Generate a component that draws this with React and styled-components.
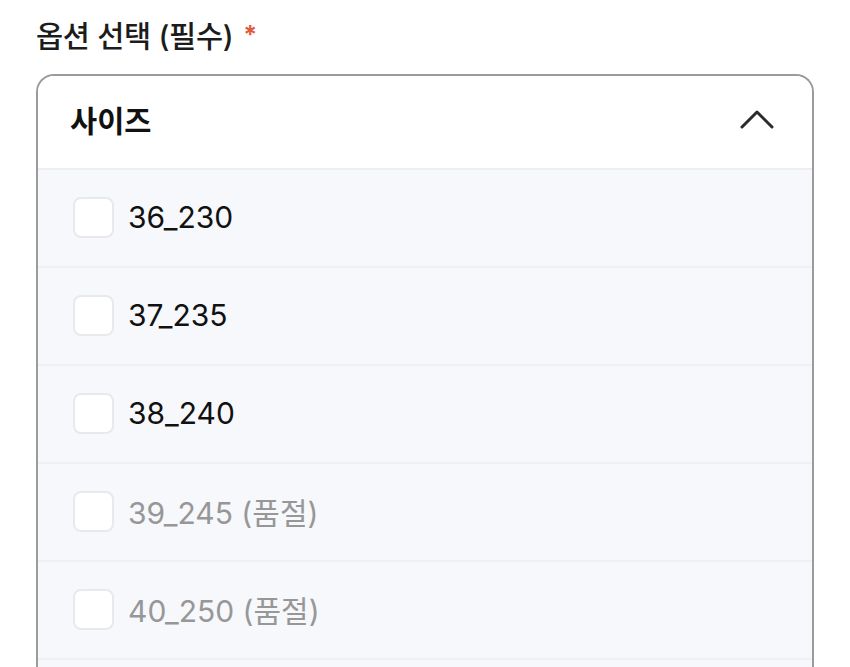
import styled, { createGlobalStyle } from 'styled-components'

const Global = createGlobalStyle`
  html, body {
    margin: 0;
    padding: 0;
    background: #fff;
    overflow: hidden;
  }
  body {
    font-family: 'Inter', 'Noto Sans CJK KR', sans-serif;
    color: #111;
  }
`

const Page = styled.div`
  padding: 13px 36px 0 36px;
`

const Label = styled.div`
  display: flex;
  align-items: center;
  gap: 10px;
  height: 42px;
  font-size: 29.5px;
  font-weight: 500;
  color: #1c1c1c;
  letter-spacing: -0.3px;
  margin-bottom: 19px;
`

const Required = styled.span`
  color: #e2583e;
  font-size: 25px;
  font-weight: 700;
  margin-top: 2px;
`

const Box = styled.div`
  border: 2px solid #9b9b9b;
  border-radius: 18px 18px 0 0;
  border-bottom: none;
  overflow: hidden;
  height: 700px;
  background: #f6f8fb;
`

const Header = styled.div`
  display: flex;
  align-items: center;
  justify-content: space-between;
  height: 94px;
  padding: 0 38px 6px 32px;
  background: #fff;
  border-bottom: 2px solid #eceef1;
  box-sizing: border-box;
  font-size: 29.5px;
  font-weight: 700;
  color: #111;
`

const Row = styled.div`
  display: flex;
  align-items: center;
  gap: 14px;
  height: 98px;
  padding-left: 35px;
  padding-bottom: 2px;
  box-sizing: border-box;
  border-bottom: 2px solid #eef0f4;
  font-size: 30px;
  color: ${p => (p.$soldOut ? '#979797' : '#111')};
`

const Check = styled.span`
  width: 41px;
  height: 41px;
  box-sizing: border-box;
  border: 2px solid #e8e9ed;
  border-radius: 8px;
  background: #fff;
  flex-shrink: 0;
`

const options = [
  { name: '36_230' },
  { name: '37_235' },
  { name: '38_240' },
  { name: '39_245 (품절)', soldOut: true },
  { name: '40_250 (품절)', soldOut: true },
  { name: '' },
]

export default function App() {
  return (
    <Page>
      <Global />
      <Label>
        옵션 선택 (필수)
        <Required>*</Required>
      </Label>
      <Box>
        <Header>
          사이즈
          <svg width="34" height="20" viewBox="0 0 34 20" fill="none">
            <path d="M2 18 L17 3 L32 18" stroke="#2b2b2b" strokeWidth="3" strokeLinecap="round" strokeLinejoin="round" />
          </svg>
        </Header>
        {options.map((o, i) => (
          <Row key={i} $soldOut={o.soldOut}>
            {o.name && <Check />}
            {o.name}
          </Row>
        ))}
      </Box>
    </Page>
  )
}
